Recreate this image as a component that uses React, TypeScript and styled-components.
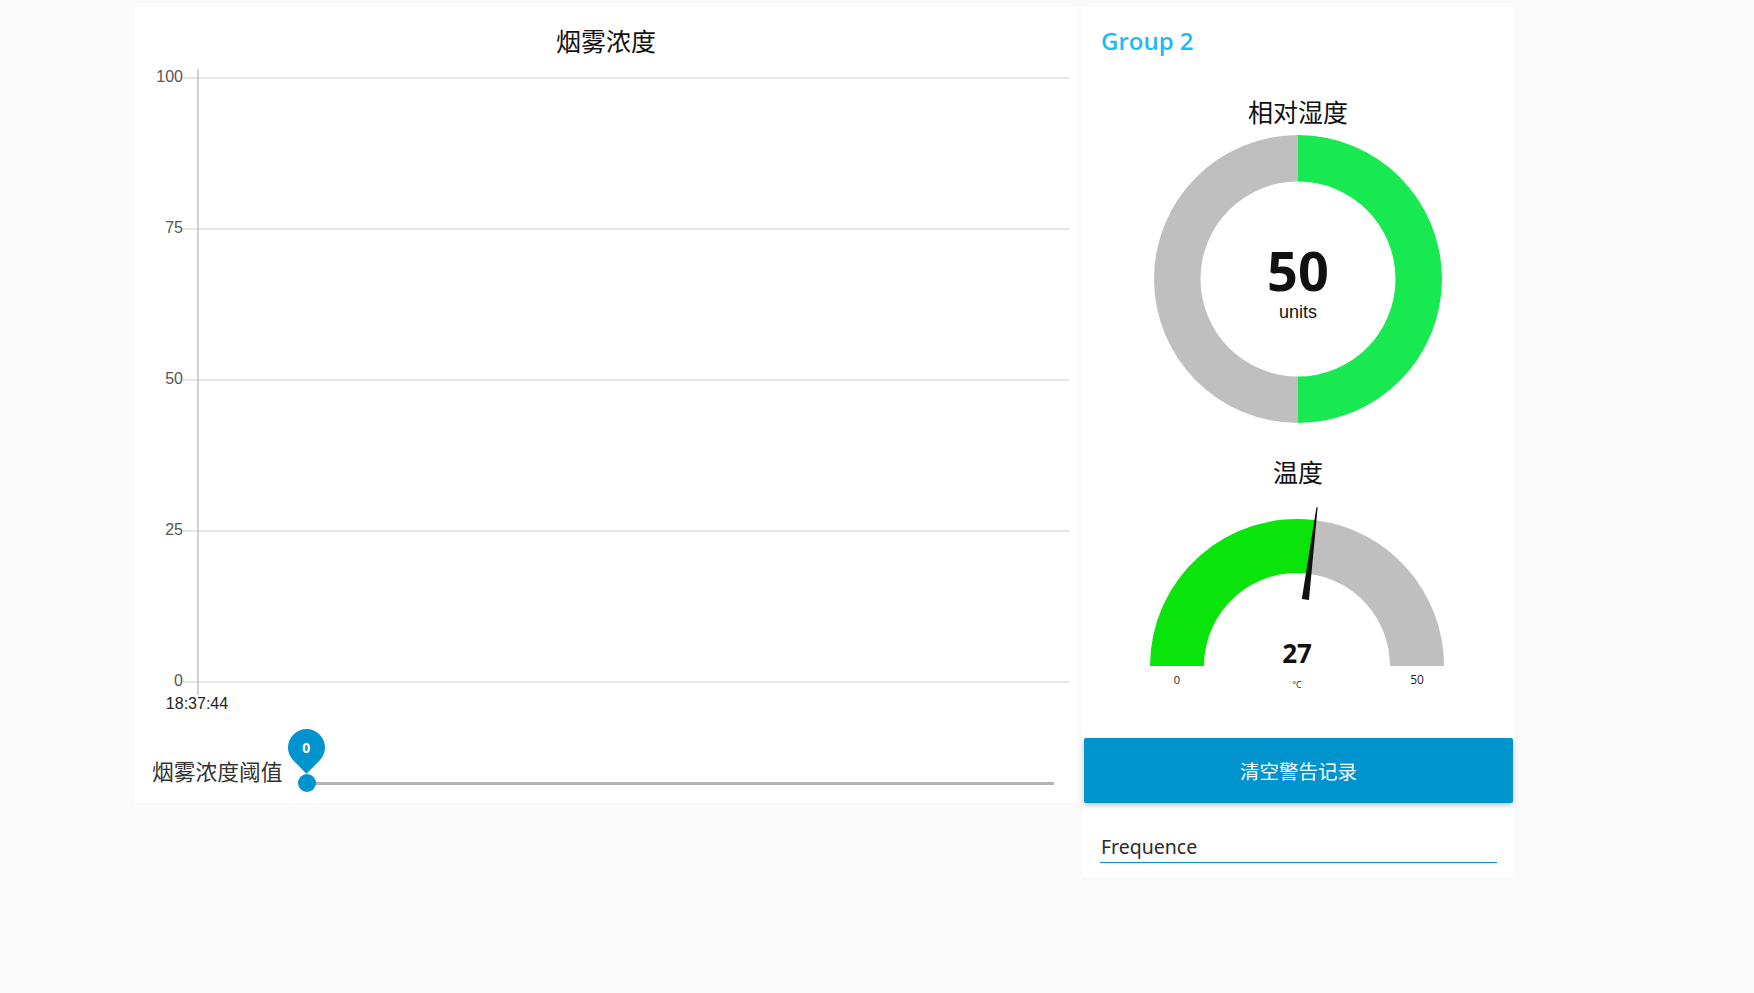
import React from "react";
import styled, { createGlobalStyle } from "styled-components";

const GlobalStyle = createGlobalStyle`
  html, body { margin: 0; padding: 0; background: #fafafa; }
  body { font-family: "Noto Sans", "Noto Sans CJK SC", sans-serif; }
  * { box-sizing: border-box; }
`;

const BLUE = "#0094ce";

const Page = styled.div`
  display: flex;
  align-items: flex-start;
  gap: 5px;
  padding: 7px 0 0 135px;
  min-height: 100vh;
  background: #fafafa;
`;

const Card = styled.div<{ $w: number; $h: number }>`
  width: ${(p) => p.$w}px;
  height: ${(p) => p.$h}px;
  background: #fff;
  display: flex;
  flex-direction: column;
`;

const ChartTitle = styled.div`
  padding-top: 13px;
  padding-bottom: 1px;
  line-height: 40px;
  text-align: center;
  font-family: "Noto Sans CJK SC", sans-serif;
  font-size: 25px;
  color: #111;
`;

const ChartSvg = styled.svg`
  display: block;
  flex: none;
`;

const SliderRow = styled.div`
  display: flex;
  align-items: flex-start;
  height: 82px;
  padding: 0 14px 0 17px;
`;

const SliderLabel = styled.div`
  margin-top: 37px;
  line-height: 26px;
  font-family: "Noto Sans CJK SC", sans-serif;
  font-size: 21.75px;
  color: #333;
  white-space: nowrap;
`;

const SliderTrack = styled.div`
  position: relative;
  flex: 1;
  margin-left: 15px;
  margin-top: 53px;
  height: 18px;
  &::before {
    content: "";
    position: absolute;
    left: 9px;
    right: 9px;
    top: 7.5px;
    height: 3px;
    background: #b3b3b3;
  }
`;

const Thumb = styled.div`
  position: absolute;
  left: 0;
  top: 0;
  width: 18px;
  height: 18px;
  border-radius: 50%;
  background: ${BLUE};
`;

const ThumbLabel = styled.div`
  position: absolute;
  left: -9.5px;
  top: -45.5px;
  width: 37px;
  height: 37px;
  border-radius: 50% 50% 0;
  background: ${BLUE};
  transform: rotate(45deg);
  display: flex;
  align-items: center;
  justify-content: center;
`;

const ThumbText = styled.span`
  transform: rotate(-45deg);
  color: #fff;
  font-family: "Open Sans", sans-serif;
  font-weight: 700;
  font-size: 14px;
`;

const GroupTitle = styled.div`
  height: 68px;
  padding-left: 19px;
  padding-bottom: 2px;
  display: flex;
  align-items: center;
  font-family: "Open Sans", "Noto Sans", sans-serif;
  font-weight: 600;
  font-size: 24px;
  color: #1ebaf6;
`;

const GaugeTitle = styled.div<{ $mt: number }>`
  margin-top: ${(p) => p.$mt}px;
  margin-bottom: 3px;
  line-height: 30px;
  text-align: center;
  font-family: "Noto Sans CJK SC", sans-serif;
  font-size: 25px;
  color: #111;
`;

const GaugeSvg = styled.svg`
  display: block;
  flex: none;
`;

const ActionButton = styled.button`
  margin: 39px 1px 0 2px;
  height: 65px;
  border: none;
  border-radius: 2px;
  background: ${BLUE};
  color: #fff;
  font-family: "Noto Sans CJK SC", sans-serif;
  font-size: 19.5px;
  padding-bottom: 2px;
  box-shadow: 0 2px 5px rgba(0, 0, 0, 0.26);
  cursor: pointer;
`;

const InputWrap = styled.div`
  margin: 24px 17px 0 18px;
`;

const TextInput = styled.input`
  width: 100%;
  height: 36px;
  padding: 4px 0 0 1px;
  border: none;
  border-bottom: 1px solid ${BLUE};
  outline: none;
  background: transparent;
  font-family: "Noto Sans", sans-serif;
  font-size: 19.5px;
  color: #222;
  &::placeholder { color: #2a2a2a; opacity: 1; }
`;

const gridYs = [17, 168, 319, 470, 621];
const gridLabels = ["100", "75", "50", "25", "0"];

function LineChart() {
  return (
    <ChartSvg width={942} height={660} viewBox="0 0 942 660">
      {gridYs.map((y, i) => (
        <g key={y}>
          <line x1={48} x2={934} y1={y} y2={y} stroke="#e6e6e6" strokeWidth={2} />
          <text
            x={48}
            y={y + 4}
            textAnchor="end"
            fontFamily="'Liberation Sans', Arial, sans-serif"
            fontSize={16}
            fill="#555"
          >
            {gridLabels[i]}
          </text>
        </g>
      ))}
      <line x1={63} x2={63} y1={8} y2={634} stroke="#c2c2c2" strokeWidth={1.5} />
      <text
        x={62}
        y={648}
        textAnchor="middle"
        fontFamily="'Liberation Sans', Arial, sans-serif"
        fontSize={16}
        fill="#222"
      >
        18:37:44
      </text>
    </ChartSvg>
  );
}

function Donut() {
  const cx = 216;
  const cy = 150;
  const R = 144;
  const r = 97.5;
  const right = `M ${cx} ${cy - R} A ${R} ${R} 0 0 1 ${cx} ${cy + R} L ${cx} ${cy + r} A ${r} ${r} 0 0 0 ${cx} ${cy - r} Z`;
  const left = `M ${cx} ${cy - R} A ${R} ${R} 0 0 0 ${cx} ${cy + R} L ${cx} ${cy + r} A ${r} ${r} 0 0 1 ${cx} ${cy - r} Z`;
  return (
    <GaugeSvg width={432} height={300} viewBox="0 0 432 300">
      <path d={left} fill="#bfbfbf" />
      <path d={right} fill="#19e950" />
      <text
        x={cx}
        y={162}
        textAnchor="middle"
        fontFamily="'Open Sans', sans-serif"
        fontWeight={700}
        fontSize={54}
        fill="#111"
      >
        50
      </text>
      <text
        x={cx}
        y={189}
        textAnchor="middle"
        fontFamily="'Liberation Sans', Arial, sans-serif"
        fontSize={18}
        fill="#111"
      >
        units
      </text>
    </GaugeSvg>
  );
}

function HalfGauge({ value, min, max }: { value: number; min: number; max: number }) {
  const cx = 215;
  const cy = 177;
  const R = 147;
  const r = 93;
  const frac = (value - min) / (max - min);
  const th = Math.PI * (1 - frac);
  const pt = (rad: number, a: number) => [cx + rad * Math.cos(a), cy - rad * Math.sin(a)];
  const [ox, oy] = pt(R, th);
  const [ix, iy] = pt(r, th);
  const green = `M ${cx - R} ${cy} A ${R} ${R} 0 0 1 ${ox} ${oy} L ${ix} ${iy} A ${r} ${r} 0 0 0 ${cx - r} ${cy} Z`;
  const grey = `M ${ox} ${oy} A ${R} ${R} 0 0 1 ${cx + R} ${cy} L ${cx + r} ${cy} A ${r} ${r} 0 0 0 ${ix} ${iy} Z`;
  const ux = Math.cos(th);
  const uy = -Math.sin(th);
  const px = -uy;
  const py = ux;
  const b0 = 67;
  const b1 = 160;
  const w0 = 3.6;
  const w1 = 0.6;
  const needle = [
    [cx + ux * b0 + px * w0, cy + uy * b0 + py * w0],
    [cx + ux * b1 + px * w1, cy + uy * b1 + py * w1],
    [cx + ux * b1 - px * w1, cy + uy * b1 - py * w1],
    [cx + ux * b0 - px * w0, cy + uy * b0 - py * w0],
  ]
    .map((p) => p.join(","))
    .join(" ");
  return (
    <GaugeSvg width={432} height={210} viewBox="0 0 432 210">
      <path d={green} fill="#0ae40a" />
      <path d={grey} fill="#bfbfbf" />
      <polygon points={needle} fill="#111" />
      <text
        x={cx}
        y={174}
        textAnchor="middle"
        fontFamily="'Open Sans', sans-serif"
        fontWeight={700}
        fontSize={26}
        fill="#111"
      >
        {value}
      </text>
      <text x={cx - 120} y={195} textAnchor="middle" fontFamily="'Open Sans', sans-serif" fontSize={11} fill="#222">
        {min}
      </text>
      <text x={cx + 120} y={195} textAnchor="middle" fontFamily="'Open Sans', sans-serif" fontSize={12} fill="#222">
        {max}
      </text>
      <text x={cx} y={199} textAnchor="middle" fontFamily="'Open Sans', sans-serif" fontSize={9} fill="#222">
        °C
      </text>
    </GaugeSvg>
  );
}

export default function App() {
  return (
    <>
      <GlobalStyle />
      <Page>
        <Card $w={942} $h={796}>
          <ChartTitle>烟雾浓度</ChartTitle>
          <LineChart />
          <SliderRow>
            <SliderLabel>烟雾浓度阈值</SliderLabel>
            <SliderTrack>
              <Thumb />
              <ThumbLabel>
                <ThumbText>0</ThumbText>
              </ThumbLabel>
            </SliderTrack>
          </SliderRow>
        </Card>
        <Card $w={432} $h={870}>
          <GroupTitle>Group 2</GroupTitle>
          <GaugeTitle $mt={21}>相对湿度</GaugeTitle>
          <Donut />
          <GaugeTitle $mt={27}>温度</GaugeTitle>
          <HalfGauge value={27} min={0} max={50} />
          <ActionButton>清空警告记录</ActionButton>
          <InputWrap>
            <TextInput placeholder="Frequence" />
          </InputWrap>
        </Card>
      </Page>
    </>
  );
}
